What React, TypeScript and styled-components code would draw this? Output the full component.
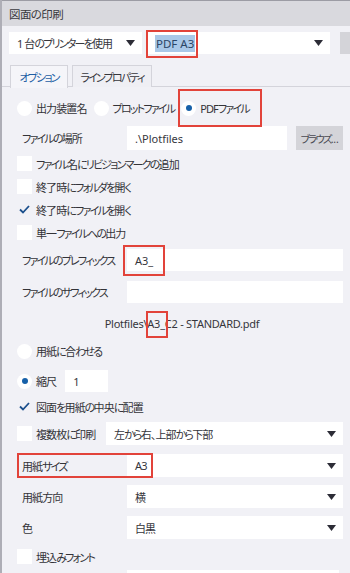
import React from "react";
import styled, { createGlobalStyle, css } from "styled-components";

const GlobalStyle = createGlobalStyle`
  html, body { margin: 0; padding: 0; background: #f1f1f6; }
  body {
    font-family: "Noto Sans", "Noto Sans CJK JP", sans-serif;
    font-size: 11px;
    color: #333338;
    font-feature-settings: "palt" 1;
    letter-spacing: -0.9px;
  }
  * { box-sizing: border-box; }
`;

const Kana = styled.span`
  letter-spacing: -1.8px;
`;

const JText = ({ children }: { children: string }) => {
  const parts = children.split(/([\u3040-\u30ff]+)/);
  return (
    <span>
      {parts.map((p, i) =>
        /[\u3040-\u30ff]/.test(p) ? <Kana key={i}>{p}</Kana> : <React.Fragment key={i}>{p}</React.Fragment>
      )}
    </span>
  );
};

const Window = styled.div`
  width: 350px;
  height: 573px;
  overflow: hidden;
  background: #f1f1f6;
  border-left: 2px solid #aeaeb6;
  display: flex;
  flex-direction: column;
`;

const TitleBar = styled.div`
  height: 26px;
  flex-shrink: 0;
  background: #d9d9de;
  border-top: 1px solid #9c9ca4;
  display: flex;
  align-items: center;
  padding-left: 7px;
  font-size: 11.5px;
  letter-spacing: -0.6px;
  color: #3a3a40;
`;

const Toolbar = styled.div`
  margin-top: 6px;
  height: 22px;
  display: flex;
  gap: 5px;
  padding-left: 7px;
`;

const SelectBox = styled.div<{ $w?: number; $flex?: boolean }>`
  ${(p) => (p.$flex ? css`flex: 1;` : css`width: ${p.$w}px;`)}
  flex-shrink: 0;
  height: 100%;
  background: #fff;
  display: flex;
  align-items: center;
  padding: 0 7px 0 8px;
  color: #36363c;
  white-space: nowrap;
`;

const SelectText = styled.span`
  flex: 1;
  display: flex;
  align-items: center;
`;

const Arrow = styled.svg`
  width: 9px;
  height: 6px;
  flex-shrink: 0;
`;

const SideButton = styled.div`
  width: 30px;
  height: 22px;
  flex-shrink: 0;
  margin-left: 5px;
  background: #d4d4d9;
`;

const Highlight = styled.span`
  background: #a9c8e8;
  color: #2b4666;
  padding: 1px 1px;
  letter-spacing: 0;
  font-size: 11.5px;
`;

const Callout = styled.span<{ $t: number; $r: number; $b: number; $l: number }>`
  position: relative;
  display: inline-flex;
  align-items: center;
  &::after {
    content: "";
    position: absolute;
    z-index: 2;
    top: ${(p) => p.$t}px;
    right: ${(p) => p.$r}px;
    bottom: ${(p) => p.$b}px;
    left: ${(p) => p.$l}px;
    border: 2px solid #e2433a;
    pointer-events: none;
  }
`;

const TabBar = styled.div`
  margin-top: 11px;
  height: 22px;
  display: flex;
  gap: 4px;
  padding-left: 8px;
  border-bottom: 1px solid #d4d4db;
  flex-shrink: 0;
`;

const Tab = styled.div<{ $active?: boolean; $w: number }>`
  width: ${(p) => p.$w}px;
  border: 1px solid #d4d4db;
  border-bottom: none;
  background: ${(p) => (p.$active ? "#f5f5f9" : "#efeff4")};
  color: ${(p) => (p.$active ? "#1e5ea4" : "#36363c")};
  display: flex;
  align-items: center;
  justify-content: center;
  font-size: 11px;
  white-space: nowrap;
  margin-bottom: ${(p) => (p.$active ? "-1px" : "0")};
  height: ${(p) => (p.$active ? "23px" : "22px")};
`;

const Body = styled.div`
  display: flex;
  flex-direction: column;
  padding: 0 7px 0 15px;
`;

const Row = styled.div<{ $mt: number; $h: number; $center?: boolean }>`
  margin-top: ${(p) => p.$mt}px;
  height: ${(p) => p.$h}px;
  flex-shrink: 0;
  display: flex;
  align-items: center;
  ${(p) => p.$center && css`justify-content: center;`}
  white-space: nowrap;
`;

const RadioGroup = styled.label<{ $mr?: number }>`
  display: flex;
  align-items: center;
  gap: 4px;
  margin-right: ${(p) => p.$mr ?? 7}px;
`;

const RadioCircle = styled.span<{ $on?: boolean }>`
  width: 15px;
  height: 15px;
  border-radius: 50%;
  background: #fff;
  display: flex;
  align-items: center;
  justify-content: center;
  flex-shrink: 0;
  &::after {
    content: "";
    display: ${(p) => (p.$on ? "block" : "none")};
    width: 6px;
    height: 6px;
    border-radius: 50%;
    background: #1660a9;
  }
`;

const CheckBox = styled.span<{ $on?: boolean }>`
  width: 15px;
  height: 15px;
  background: ${(p) => (p.$on ? "transparent" : "#fff")};
  display: flex;
  align-items: center;
  justify-content: center;
  flex-shrink: 0;
  margin-right: 4px;
`;

const FieldLabel = styled.span<{ $w?: number; $pl?: number }>`
  width: ${(p) => p.$w ?? 110}px;
  padding-left: ${(p) => p.$pl ?? 5}px;
  flex-shrink: 0;
  display: flex;
  align-items: center;
`;

const TextInput = styled.div<{ $w?: number; $h?: number }>`
  ${(p) => (p.$w ? css`width: ${p.$w}px;` : css`flex: 1;`)}
  flex-shrink: 0;
  height: ${(p) => p.$h ?? 22}px;
  background: #fff;
  display: flex;
  align-items: center;
  padding-left: 8px;
  color: #36363c;
  letter-spacing: 0;
`;

const Button = styled.div`
  width: 47px;
  height: 24px;
  margin-left: 9px;
  background: #d4d4d9;
  display: flex;
  align-items: center;
  justify-content: center;
  font-size: 10.5px;
  letter-spacing: -0.3px;
  color: #4a4a52;
`;

const PathText = styled.span`
  color: #36363c;
  margin-left: 4px;
  font-size: 11px;
  letter-spacing: -0.25px;
  display: inline-flex;
  align-items: center;
`;

const DownArrow = () => (
  <Arrow viewBox="0 0 9 6">
    <path d="M0 0 H9 L4.5 6 Z" fill="#2c2c36" />
  </Arrow>
);

const Check = () => (
  <svg width="11" height="9" viewBox="0 0 11 9">
    <path d="M1 4.5 L4 7.5 L10 1" fill="none" stroke="#1b4f8c" strokeWidth="1.8" />
  </svg>
);

const Select = ({ children, w }: { children: React.ReactNode; w?: number }) => (
  <SelectBox $w={w} $flex={!w}>
    <SelectText>{children}</SelectText>
    <DownArrow />
  </SelectBox>
);

const CheckRow = ({ mt, on, label }: { mt: number; on?: boolean; label: string }) => (
  <Row $mt={mt} $h={23}>
    <CheckBox $on={on}>{on && <Check />}</CheckBox>
    <JText>{label}</JText>
  </Row>
);

export default function App() {
  return (
    <>
      <GlobalStyle />
      <Window>
        <TitleBar>図面の印刷</TitleBar>
        <Toolbar>
          <Select w={133}><JText>1 台のプリンターを使用</JText></Select>
          <Select w={183}>
            <Callout $t={-5} $r={-3} $b={-6} $l={-9}>
              <Highlight>PDF A3</Highlight>
            </Callout>
          </Select>
          <SideButton />
        </Toolbar>
        <TabBar>
          <Tab $active $w={58}><JText>オプション</JText></Tab>
          <Tab $w={80}><JText>ラインプロパティ</JText></Tab>
        </TabBar>
        <Body>
          <Row $mt={10} $h={22}>
            <RadioGroup>
              <RadioCircle />
              <span>出力装置名</span>
            </RadioGroup>
            <RadioGroup>
              <RadioCircle />
              <JText>プロットファイル</JText>
            </RadioGroup>
            <Callout $t={-11} $r={-13} $b={-11} $l={-3}>
              <RadioGroup $mr={0}>
                <RadioCircle $on />
                <span>PDF<JText>ファイル</JText></span>
              </RadioGroup>
            </Callout>
          </Row>
          <Row $mt={7} $h={24}>
            <FieldLabel><JText>ファイルの場所</JText></FieldLabel>
            <TextInput $w={160} $h={24}>.\Plotfiles</TextInput>
            <Button><JText>ブラウズ...</JText></Button>
          </Row>
          <CheckRow mt={2} label="ファイル名にリビジョンマークの追加" />
          <CheckRow mt={0} label="終了時にフォルダを開く" />
          <CheckRow mt={0} on label="終了時にファイルを開く" />
          <CheckRow mt={0} label="単一ファイルへの出力" />
          <Row $mt={5} $h={22}>
            <FieldLabel><JText>ファイルのプレフィックス</JText></FieldLabel>
            <TextInput>
              <Callout $t={-8} $r={-12} $b={-8} $l={-12}>A3_</Callout>
            </TextInput>
          </Row>
          <Row $mt={10} $h={22}>
            <FieldLabel><JText>ファイルのサフィックス</JText></FieldLabel>
            <TextInput />
          </Row>
          <Row $mt={9} $h={22} $center>
            <PathText>
              Plotfiles\
              <Callout $t={-5} $r={-3} $b={-7} $l={-1}>A3_</Callout>
              C2 - STANDARD.pdf
            </PathText>
          </Row>
          <Row $mt={6} $h={22}>
            <RadioGroup>
              <RadioCircle />
              <JText>用紙に合わせる</JText>
            </RadioGroup>
          </Row>
          <Row $mt={8} $h={22}>
            <RadioGroup $mr={9}>
              <RadioCircle $on />
              <span>縮尺</span>
            </RadioGroup>
            <TextInput $w={43}>1</TextInput>
          </Row>
          <CheckRow mt={3} on label="図面を用紙の中央に配置" />
          <Row $mt={4} $h={23}>
            <CheckBox />
            <FieldLabel $w={70} $pl={0}><JText>複数枚に印刷</JText></FieldLabel>
            <Select><JText>左から右、上部から下部</JText></Select>
          </Row>
          <Row $mt={9} $h={23}>
            <Callout $t={-5} $r={-26} $b={-4} $l={0}>
              <FieldLabel><JText>用紙サイズ</JText></FieldLabel>
            </Callout>
            <Select>A3</Select>
          </Row>
          <Row $mt={8} $h={23}>
            <FieldLabel>用紙方向</FieldLabel>
            <Select>横</Select>
          </Row>
          <Row $mt={8} $h={23}>
            <FieldLabel>色</FieldLabel>
            <Select>白黒</Select>
          </Row>
          <CheckRow mt={6} label="埋込みフォント" />
          <Row $mt={2} $h={22}>
            <FieldLabel />
            <TextInput $w={212} />
          </Row>
        </Body>
      </Window>
    </>
  );
}
